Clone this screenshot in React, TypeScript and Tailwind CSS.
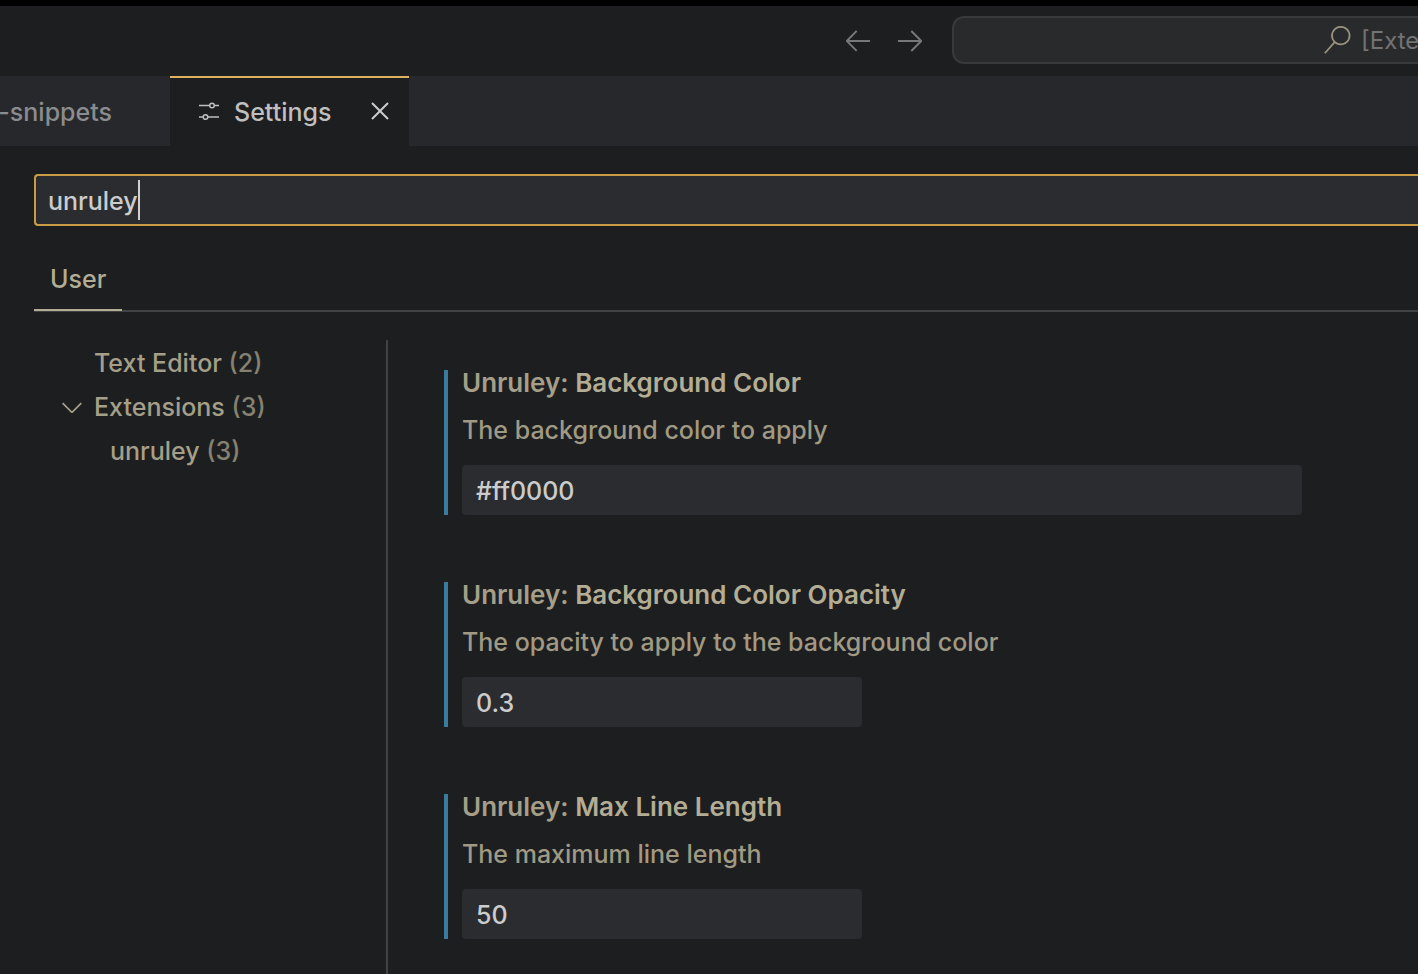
import type { ReactNode } from "react";
import {
  VscArrowLeft,
  VscArrowRight,
  VscChevronDown,
  VscClose,
  VscSearch,
} from "react-icons/vsc";

type Setting = {
  id: string;
  name: string;
  description: string;
  value: string;
  wide?: boolean;
};

const settings: Setting[] = [
  {
    id: "background-color",
    name: "Background Color",
    description: "The background color to apply",
    value: "#ff0000",
    wide: true,
  },
  {
    id: "background-opacity",
    name: "Background Color Opacity",
    description: "The opacity to apply to the background color",
    value: "0.3",
  },
  {
    id: "max-line-length",
    name: "Max Line Length",
    description: "The maximum line length",
    value: "50",
  },
];

function SlidersIcon() {
  return (
    <svg
      viewBox="0 0 20 20"
      className="size-5"
      fill="none"
      stroke="currentColor"
      strokeWidth="1.5"
      aria-hidden="true"
    >
      <path d="M0 3.5h10.5M15.5 3.5H20M0 15h4M9 15h11" />
      <circle cx="13" cy="3.5" r="2.3" />
      <circle cx="6.5" cy="15" r="2.3" />
    </svg>
  );
}

function TitleBar() {
  return (
    <header className="flex h-[76px] items-center justify-end border-t-[6px] border-black pb-[2px]">
      <nav className="flex gap-5 pr-[26px] text-[#78787a]">
        <button type="button" aria-label="Go back">
          <VscArrowLeft className="size-8" />
        </button>
        <button type="button" aria-label="Go forward">
          <VscArrowRight className="size-8" />
        </button>
      </nav>
      <button
        type="button"
        className="flex h-12 w-[466px] items-center rounded-l-xl border-2 border-r-0 border-[#38393b] bg-[#292a2c] pl-[369px] text-2xl text-[#727375]"
      >
        <VscSearch className="mr-[10px] size-7 shrink-0 text-[#9a947f]" />
        <span className="pt-[2px]">[Exte</span>
      </button>
    </header>
  );
}

function EditorTabs() {
  return (
    <div role="tablist" className="flex h-[70px] bg-[#27282c] font-medium">
      <button
        type="button"
        role="tab"
        aria-selected="false"
        className="flex w-[170px] items-center justify-end overflow-hidden pt-[2px] pr-[58px] whitespace-nowrap text-[#8b8c8e]"
      >
        -snippets
      </button>
      <div className="flex w-[239px] items-center justify-between border-t-2 border-[#deb060] bg-[#1d1e20] pr-[13px] pb-[2px] pl-[29px] text-[#bfbfbf]">
        <button type="button" role="tab" aria-selected="true" className="flex items-center gap-[15px] pt-[2px]">
          <SlidersIcon />
          Settings
        </button>
        <button type="button" aria-label="Close Settings" className="text-[#cccccc]">
          <VscClose className="size-8" />
        </button>
      </div>
    </div>
  );
}

function SearchBox() {
  return (
    <div className="relative pl-[34px]">
      <input
        type="text"
        aria-label="Search settings"
        defaultValue="unruley"
        className="block h-[52px] w-full rounded-l border-2 border-r-0 border-[#cb9a44] bg-[#2b2c30] px-3 pt-[2px] font-medium text-[#cccccc] caret-transparent outline-none"
      />
      <span className="absolute top-[6px] left-[138px] h-10 w-[2px] bg-[#d0d0d0]" />
    </div>
  );
}

function TreeRow({
  label,
  count,
  indent,
  icon,
}: {
  label: string;
  count: number;
  indent: string;
  icon?: ReactNode;
}) {
  return (
    <li>
      <button type="button" className={`flex h-11 items-center font-medium text-[#a59f89] ${indent}`}>
        {icon}
        <span className="whitespace-pre">
          {label} <span className="text-[#858170]">({count})</span>
        </span>
      </button>
    </li>
  );
}

function SettingItem({ setting }: { setting: Setting }) {
  return (
    <div className="border-l-4 border-[#3a7c9e] pl-[14px]">
      <label
        htmlFor={setting.id}
        className="block h-[26px] text-[26px] leading-[26px] font-semibold text-[#a59f89]"
      >
        Unruley: <span className="text-[#b3ad95]">{setting.name}</span>
      </label>
      <p className="mt-5 h-7 leading-7 font-medium text-[#a09a84]">{setting.description}</p>
      <input
        id={setting.id}
        type="text"
        defaultValue={setting.value}
        className={`mt-[21px] block h-[50px] max-w-full rounded bg-[#2b2c30] px-[14px] pt-[2px] font-medium text-[#cccccc] outline-none ${
          setting.wide ? "w-[840px]" : "w-[400px]"
        }`}
      />
    </div>
  );
}

export default function App() {
  return (
    <div className="flex min-h-screen flex-col overflow-hidden bg-[#1d1e20] font-['Inter',sans-serif] text-[25px] leading-8">
      <TitleBar />
      <EditorTabs />
      <main className="flex grow flex-col pt-7">
        <SearchBox />
        <div className="mt-[26px] ml-[34px] flex h-[60px] border-b-2 border-[#414244]">
          <button
            type="button"
            className="-mb-[1px] h-[59px] border-b-2 border-[#b3ad95] px-4 pb-1 font-medium text-[#b3ad95]"
          >
            User
          </button>
        </div>
        <div className="mt-7 flex grow">
          <aside className="w-[388px] shrink-0 border-r-2 border-[#414244]">
            <ul className="pt-[1px]">
              <TreeRow label="Text Editor" count={2} indent="pl-[94px]" />
              <TreeRow
                label="Extensions"
                count={3}
                indent="pl-14"
                icon={<VscChevronDown className="mr-[6px] size-8" />}
              />
              <TreeRow label="unruley" count={3} indent="pl-[110px]" />
            </ul>
          </aside>
          <section className="flex grow flex-col gap-[67px] pt-[30px] pr-6 pl-14">
            {settings.map((setting) => (
              <SettingItem key={setting.id} setting={setting} />
            ))}
          </section>
        </div>
      </main>
    </div>
  );
}
